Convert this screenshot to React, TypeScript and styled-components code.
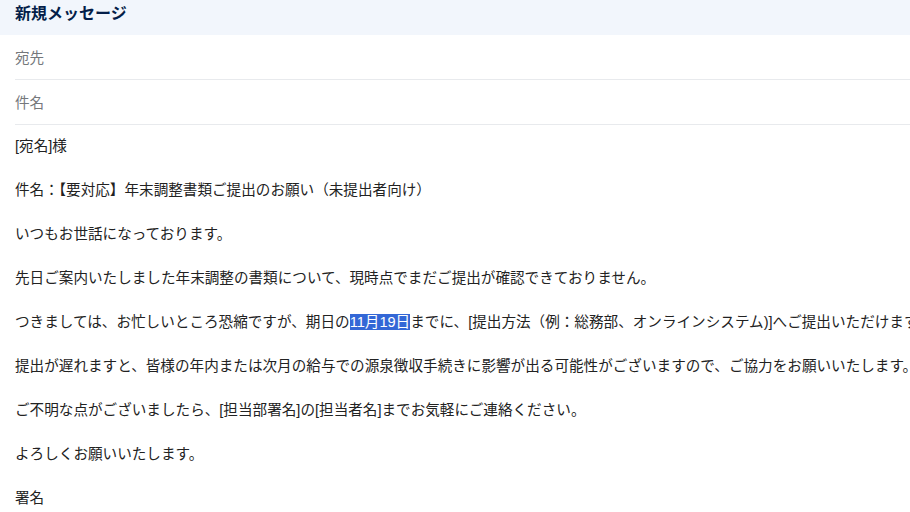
import React from "react";
import styled, { createGlobalStyle } from "styled-components";

const GlobalStyle = createGlobalStyle`
  html, body {
    margin: 0;
    padding: 0;
    background: #ffffff;
    overflow: hidden;
  }
  body {
    font-family: "Liberation Sans", "Noto Sans CJK JP", sans-serif;
  }
`;

const Window = styled.div`
  width: 910px;
  height: 512px;
  overflow: hidden;
  background: #ffffff;
  display: flex;
  flex-direction: column;
`;

const Header = styled.div`
  flex: 0 0 35px;
  box-sizing: border-box;
  padding: 2px 15px 0;
  background: #f2f6fc;
  color: #041e49;
  font-family: "Noto Sans CJK JP", sans-serif;
  font-size: 16px;
  font-weight: 600;
  line-height: 20px;
`;

const Fields = styled.div`
  margin-left: 15px;
  display: flex;
  flex-direction: column;
`;

const FieldRow = styled.div`
  height: 42px;
  padding-bottom: 2px;
  display: flex;
  align-items: center;
  border-bottom: 1px solid #e8eaed;
  color: #75787c;
  font-family: "Liberation Sans", "Noto Sans CJK JP", sans-serif;
  font-size: 14.6px;
`;

const Body = styled.div`
  padding: 10px 0 0 15px;
  color: #222222;
  font-family: "Liberation Sans", "Noto Sans CJK JP", sans-serif;
  font-size: 14.6px;
  line-height: 22px;
  white-space: nowrap;
`;

const Para = styled.p`
  margin: 0 0 22px;
`;

const Line = styled.div`
  margin: 0;
`;

const Selected = styled.span`
  background: #3367d6;
  color: #ffffff;
`;

export default function App() {
  return (
    <>
      <GlobalStyle />
      <Window>
        <Header>新規メッセージ</Header>
        <Fields>
          <FieldRow>宛先</FieldRow>
          <FieldRow>件名</FieldRow>
        </Fields>
        <Body>
          <Para>[宛名]様</Para>
          <Para>件名：【要対応】年末調整書類ご提出のお願い（未提出者向け）</Para>
          <Para>いつもお世話になっております。</Para>
          <Para>先日ご案内いたしました年末調整の書類について、現時点でまだご提出が確認できておりません。</Para>
          <Para>
            つきましては、お忙しいところ恐縮ですが、期日の<Selected>11月19日</Selected>までに、[提出方法（例：総務部、オンラインシステム)]へご提出いただけますよう、よろしくお願いいたします。
          </Para>
          <Para>提出が遅れますと、皆様の年内または次月の給与での源泉徴収手続きに影響が出る可能性がございますので、ご協力をお願いいたします。</Para>
          <Para>ご不明な点がございましたら、[担当部署名]の[担当者名]までお気軽にご連絡ください。</Para>
          <Para>よろしくお願いいたします。</Para>
          <Para>
            <Line>署名</Line>
            <Line>[部署名]</Line>
          </Para>
        </Body>
      </Window>
    </>
  );
}
